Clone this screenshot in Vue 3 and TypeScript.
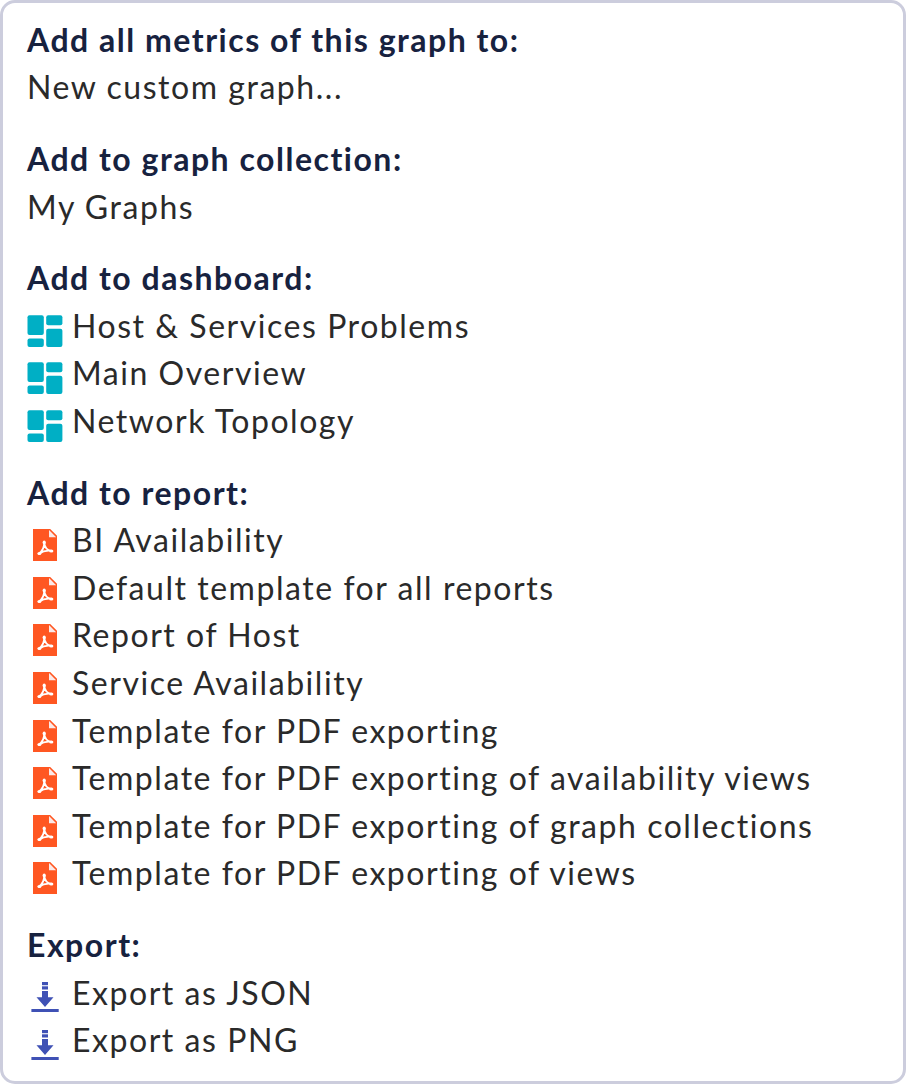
<script setup lang="ts">
type Kind = 'none' | 'dashboard' | 'pdf' | 'export'
interface Section { title: string; kind: Kind; items: string[] }
const sections: Section[] = [
  { title: 'Add all metrics of this graph to:', kind: 'none', items: ['New custom graph...'] },
  { title: 'Add to graph collection:', kind: 'none', items: ['My Graphs'] },
  { title: 'Add to dashboard:', kind: 'dashboard', items: ['Host & Services Problems', 'Main Overview', 'Network Topology'] },
  { title: 'Add to report:', kind: 'pdf', items: ['BI Availability', 'Default template for all reports', 'Report of Host', 'Service Availability', 'Template for PDF exporting', 'Template for PDF exporting of availability views', 'Template for PDF exporting of graph collections', 'Template for PDF exporting of views'] },
  { title: 'Export:', kind: 'export', items: ['Export as JSON', 'Export as PNG'] },
]
</script>

<template>
  <div class="menu">
    <section v-for="s in sections" :key="s.title" class="section">
      <h2 class="title">{{ s.title }}</h2>
      <a v-for="item in s.items" :key="item" class="item">
        <svg v-if="s.kind === 'dashboard'" class="icon" viewBox="0 0 36 36">
          <g fill="#00afc5">
            <rect x="0.500" y="2.200" width="16.300" height="19.800" rx="2" />
            <rect x="19.200" y="2.200" width="16.200" height="10.100" rx="2" />
            <rect x="0.500" y="25.600" width="16.300" height="8.400" rx="2" />
            <rect x="19.200" y="15.800" width="16.200" height="18.200" rx="2" />
          </g>
        </svg>
        <svg v-else-if="s.kind === 'pdf'" class="icon" viewBox="0 0 36 36">
          <path d="M6 2H23.200L30 8.800V34H6Z" fill="#ff5722" />
          <path d="M22 3L29.200 10.200H22Z" fill="#fbe9e7" />
          <path d="M17.200 15C17.400 19.500 20 23.200 24.500 23.900M24.500 23.900C20 23.200 15.500 24.300 11.900 26.700M11.900 26.700C15.500 23.800 17.500 19.500 17.200 15" fill="none" stroke="#fff" stroke-width="1.800" stroke-linecap="round" stroke-linejoin="round" />
          <g fill="#fff">
            <ellipse cx="17.200" cy="15.500" rx="1.600" ry="2.100" />
            <ellipse cx="24.300" cy="23.900" rx="2.100" ry="1.500" />
            <ellipse cx="12.400" cy="26.600" rx="2" ry="1.500" />
          </g>
        </svg>
        <svg v-else-if="s.kind === 'export'" class="icon icon-export" viewBox="0 0 36 36">
          <g fill="#3f51b5">
            <rect x="15" y="2" width="6" height="3.200" />
            <rect x="15" y="6.300" width="6" height="3.200" />
            <path d="M15 11H21V17.300H26.500L18 27L9.500 17.300H15Z" />
            <rect x="4.400" y="29" width="27.300" height="3" />
          </g>
        </svg>
        <span>{{ item }}</span>
      </a>
    </section>
  </div>
</template>

<style scoped>
.menu { box-sizing: border-box; width: 906px; height: 1084px; border: 3px solid #cccddd; border-radius: 15px; background: #fff; padding: 12.800px 24px; font-family: Lato, sans-serif; font-size: 32px; letter-spacing: 1.540px; line-height: 47.600px; color: #2a2a2a; }
.section { margin-bottom: 24.035px; }
.title { margin: 0; font-size: inherit; font-weight: 700; letter-spacing: 1.510px; color: #17223f; }
.item { display: flex; height: 47.600px; white-space: nowrap; }
.icon { width: 36px; height: 36px; margin: 11px 9px 0 0; flex: none; }
.icon-export { margin-top: 11.500px; }
</style>
<style>
body { background: #fff; }
</style>
